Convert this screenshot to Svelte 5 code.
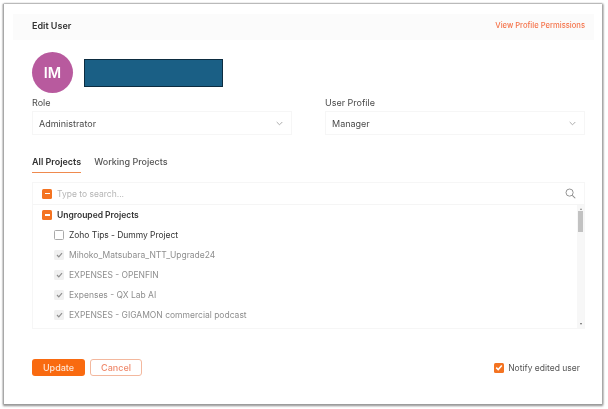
<script>
  const projects = [
    'Mihoko_Matsubara_NTT_Upgrade24',
    'EXPENSES - OPENFIN',
    'Expenses - QX Lab AI',
    'EXPENSES - GIGAMON commercial podcast'
  ];
</script>

<div class="page">
  <div class="card">
    <header class="head">
      <span class="title">Edit User</span>
      <span class="perm">View Profile Permissions</span>
    </header>

    <div class="body">
      <div class="user">
        <div class="avatar">IM</div>
        <div class="redact"></div>
      </div>

      <div class="fields">
        <div class="field">
          <div class="label">Role</div>
          <div class="select">
            <span>Administrator</span>
            <svg width="7" height="5" viewBox="0 0 7 5"><path d="M.7 1l2.8 2.8L6.3 1" fill="none" stroke="#a3a3a3" stroke-width="0.9"/></svg>
          </div>
        </div>
        <div class="field">
          <div class="label">User Profile</div>
          <div class="select">
            <span>Manager</span>
            <svg width="7" height="5" viewBox="0 0 7 5"><path d="M.7 1l2.8 2.8L6.3 1" fill="none" stroke="#a3a3a3" stroke-width="0.9"/></svg>
          </div>
        </div>
      </div>

      <nav class="tabs">
        <span class="tab active">All Projects</span>
        <span class="tab">Working Projects</span>
      </nav>

      <div class="picker">
        <div class="search">
          <span class="box minus"><i></i></span>
          <span class="ph">Type to search...</span>
          <svg class="lens" width="11" height="11" viewBox="0 0 12 12"><circle cx="5" cy="5" r="3.9" fill="none" stroke="#8a8a8a" stroke-width="1"/><path d="M8 8l3.2 3.2" stroke="#8a8a8a" stroke-width="1.1" fill="none"/></svg>
        </div>
        <div class="listwrap">
          <div class="list">
            <div class="group">
              <span class="box minus"><i></i></span>
              <span>Ungrouped Projects</span>
            </div>
            <div class="item">
              <span class="box empty"></span>
              <span class="dark">Zoho Tips - Dummy Project</span>
            </div>
            {#each projects as p}
              <div class="item">
                <span class="box locked">
                  <svg width="7" height="6" viewBox="0 0 7 6"><path d="M1 3l1.8 1.8L6 1.2" fill="none" stroke="#8f8f8f" stroke-width="1.2"/></svg>
                </span>
                <span class="muted">{p}</span>
              </div>
            {/each}
          </div>
          <div class="scroll">
            <span class="arrow up"></span>
            <span class="thumb"></span>
            <span class="arrow down"></span>
          </div>
        </div>
      </div>

      <footer class="foot">
        <div class="btns">
          <span class="btn primary">Update</span>
          <span class="btn ghost">Cancel</span>
        </div>
        <div class="notify">
          <span class="box checked">
            <svg width="8" height="7" viewBox="0 0 8 7"><path d="M1.2 3.6l2 2L6.8 1.4" fill="none" stroke="#fff" stroke-width="1.5"/></svg>
          </span>
          <span>Notify edited user</span>
        </div>
      </footer>
    </div>
  </div>
</div>

<style>
  :global(body) {
    margin: 0;
    background: #fff;
  }
  .page {
    width: 608px;
    height: 409px;
    padding: 4px 6px 5px 4px;
    box-sizing: border-box;
    font-family: Inter, "Liberation Sans", sans-serif;
    font-size: 9px;
    color: #444;
    overflow: hidden;
    filter: blur(0.45px);
  }
  .card {
    height: 100%;
    box-sizing: border-box;
    padding: 10px 8px 0 9px;
    background: #fff;
    box-shadow: -1px 0 1px #a8a8a8, 1px 0 2px #a5a5a5, 0 1px 2px 1px #8d8d8d, 0 -1px 1px #e8e8e8;
  }
  .head {
    height: 26px;
    background: #fbfbfb;
    display: flex;
    align-items: center;
    justify-content: space-between;
    padding: 0 9px 4px 19px;
    box-sizing: border-box;
  }
  .title {
    font-size: 9px;
    font-weight: 600;
    color: #333;
  }
  .perm {
    font-size: 7.6px;
    font-weight: 500;
    color: #f5734a;
  }
  .body {
    padding: 12px 8px 0 19px;
  }
  .user {
    display: flex;
    align-items: center;
    gap: 11px;
    height: 41px;
  }
  .avatar {
    width: 41px;
    height: 41px;
    border-radius: 50%;
    background: #b85a9e;
    color: #fff;
    font-size: 14.5px;
    font-weight: 600;
    display: flex;
    align-items: center;
    justify-content: center;
  }
  .redact {
    width: 139px;
    height: 28px;
    background: #1a5f85;
    border: 1px solid #0c2c40;
    box-sizing: border-box;
  }
  .fields {
    display: grid;
    grid-template-columns: 260px 260px;
    gap: 33px;
    margin-top: 3px;
  }
  .label {
    font-size: 9px;
    line-height: 14px;
    color: #4a4a4a;
  }
  .select {
    height: 24px;
    margin-top: 1px;
    padding: 0 8px 0 6px;
    border: 1px solid #f6f6f6;
    box-sizing: border-box;
    display: flex;
    align-items: center;
    justify-content: space-between;
    color: #4a4a4a;
    font-size: 9px;
  }
  .tabs {
    display: flex;
    gap: 13px;
    margin-top: 17px;
    font-size: 9px;
    font-weight: 500;
  }
  .tab {
    color: #555;
    padding: 4px 0 4px;
    line-height: 12px;
  }
  .tab.active {
    color: #333;
    font-weight: 600;
    border-bottom: 1.5px solid #ef8a4e;
  }
  .picker {
    margin-top: 9px;
    border: 1px solid #f6f6f6;
    width: 553px;
    box-sizing: border-box;
  }
  .search {
    height: 22px;
    border-bottom: 1px solid #f5f5f5;
    display: flex;
    align-items: center;
    gap: 5px;
    padding: 0 8px 0 9px;
    box-sizing: border-box;
  }
  .ph {
    flex: 1;
    color: #b5b5b5;
    font-size: 8.5px;
  }
  .listwrap {
    display: flex;
    height: 123px;
  }
  .list {
    flex: 1;
  }
  .group {
    height: 20px;
    display: flex;
    align-items: center;
    gap: 5px;
    padding-left: 9px;
    font-weight: 600;
    color: #333;
    font-size: 8.5px;
  }
  .item {
    height: 20px;
    display: flex;
    align-items: center;
    gap: 5px;
    padding-left: 21px;
    font-size: 8.5px;
  }
  .dark {
    color: #333;
    font-weight: 400;
    letter-spacing: -0.05px;
  }
  .muted {
    color: #8e8e8e;
  }
  .box {
    width: 10px;
    height: 10px;
    flex: none;
    border-radius: 1.5px;
    box-sizing: border-box;
    display: flex;
    align-items: center;
    justify-content: center;
  }
  .minus {
    background: #f47321;
  }
  .minus i {
    display: block;
    width: 5px;
    height: 1.5px;
    background: #fff;
  }
  .empty {
    border: 1px solid #aaa;
  }
  .locked {
    background: #f0f0f0;
  }
  .checked {
    background: #f47321;
  }
  .scroll {
    width: 7px;
    background: #f7f7f7;
    display: flex;
    flex-direction: column;
    align-items: center;
  }
  .thumb {
    width: 5px;
    height: 21px;
    background: #c2c2c2;
    margin-top: 1px;
  }
  .arrow {
    width: 0;
    height: 0;
    border-left: 1.5px solid transparent;
    border-right: 1.5px solid transparent;
  }
  .arrow.up {
    border-bottom: 2px solid #888;
    margin-top: 3px;
  }
  .arrow.down {
    border-top: 2px solid #666;
    margin-top: auto;
    margin-bottom: 3px;
  }
  .foot {
    display: flex;
    align-items: center;
    justify-content: space-between;
    margin-top: 30px;
    width: 548px;
  }
  .btns {
    display: flex;
    gap: 5px;
  }
  .btn {
    height: 17px;
    border-radius: 3px;
    box-sizing: border-box;
    display: flex;
    align-items: center;
    justify-content: center;
    font-size: 9px;
    font-weight: 500;
  }
  .primary {
    width: 53px;
    background: #f96a10;
    color: #fde5d5;
  }
  .ghost {
    width: 52px;
    border: 1px solid #f3b89e;
    color: #ef8a6d;
  }
  .notify {
    display: flex;
    align-items: center;
    gap: 4px;
    font-size: 8.5px;
    color: #555;
  }
</style>
